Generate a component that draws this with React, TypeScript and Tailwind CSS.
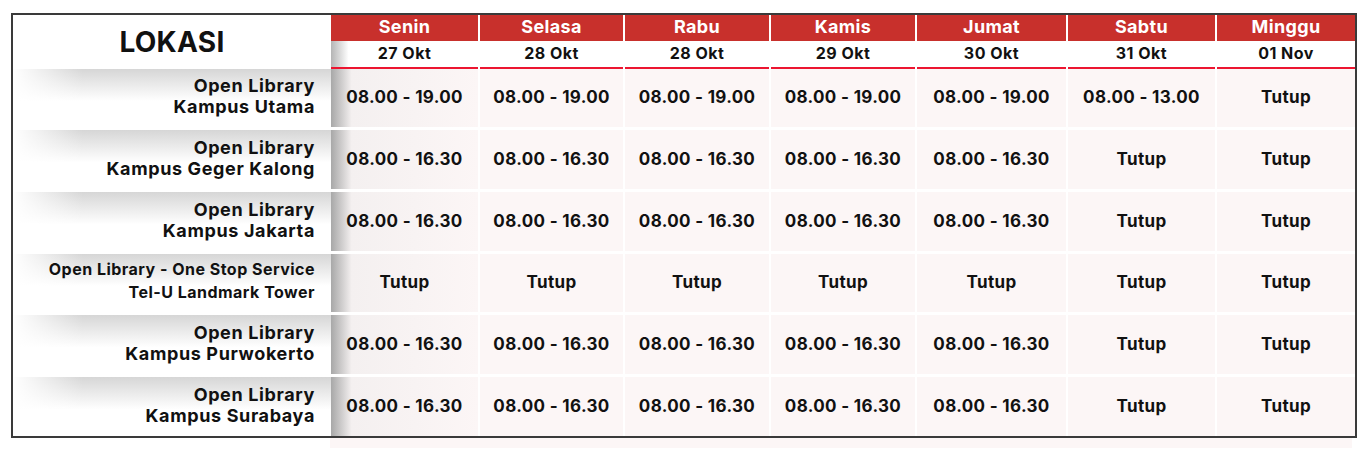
import React from 'react';

const days = [
  { day: 'Senin', date: '27 Okt' },
  { day: 'Selasa', date: '28 Okt' },
  { day: 'Rabu', date: '28 Okt' },
  { day: 'Kamis', date: '29 Okt' },
  { day: 'Jumat', date: '30 Okt' },
  { day: 'Sabtu', date: '31 Okt' },
  { day: 'Minggu', date: '01 Nov' },
];

const widths = ['w-[147px]', 'w-[145px]', 'w-[146px]', 'w-[146px]', 'w-[151px]', 'w-[149px]', 'w-[140px]'];

const rows = [
  { l1: 'Open Library', l2: 'Kampus Utama', h: 'h-[58px]', times: ['08.00 - 19.00', '08.00 - 19.00', '08.00 - 19.00', '08.00 - 19.00', '08.00 - 19.00', '08.00 - 13.00', 'Tutup'] },
  { l1: 'Open Library', l2: 'Kampus Geger Kalong', h: 'h-[62px]', times: ['08.00 - 16.30', '08.00 - 16.30', '08.00 - 16.30', '08.00 - 16.30', '08.00 - 16.30', 'Tutup', 'Tutup'] },
  { l1: 'Open Library', l2: 'Kampus Jakarta', h: 'h-[62px]', times: ['08.00 - 16.30', '08.00 - 16.30', '08.00 - 16.30', '08.00 - 16.30', '08.00 - 16.30', 'Tutup', 'Tutup'] },
  { l1: 'Open Library - One Stop Service', l2: 'Tel-U Landmark Tower', h: 'h-[61px]', small: true, times: ['Tutup', 'Tutup', 'Tutup', 'Tutup', 'Tutup', 'Tutup', 'Tutup'] },
  { l1: 'Open Library', l2: 'Kampus Purwokerto', h: 'h-[62px]', times: ['08.00 - 16.30', '08.00 - 16.30', '08.00 - 16.30', '08.00 - 16.30', '08.00 - 16.30', 'Tutup', 'Tutup'] },
  { l1: 'Open Library', l2: 'Kampus Surabaya', h: 'h-[62px]', times: ['08.00 - 16.30', '08.00 - 16.30', '08.00 - 16.30', '08.00 - 16.30', '08.00 - 16.30', 'Tutup', 'Tutup'] },
];

export default function App() {
  return (
    <div className="w-[1366px] h-[450px] bg-white pt-[13px] pl-[11px] font-['Inter','Liberation_Sans',sans-serif] text-[#111]">
      <div className="w-[1346px] border-2 border-[#3a3a3a]">
        {/* Header */}
        <div className="flex">
          <div className="w-[318px] h-[54px] flex items-center justify-center bg-white">
            <span className="text-[28px] font-bold tracking-[0.01em]">LOKASI</span>
          </div>
          {days.map((d, i) => (
            <div key={d.day} className={`${widths[i]} flex flex-col ${i > 0 ? 'border-l-2 border-white' : ''}`}>
              <div className="h-[26px] pb-[3px] bg-[#c8302c] text-white text-[18px] font-bold tracking-[0.02em] flex items-center justify-center">
                {d.day}
              </div>
              <div
                className={`h-[26px] pb-[2px] flex items-center justify-center text-[16px] font-bold tracking-[0.03em] ${
                  i === 0 ? 'bg-linear-to-r from-[#b5b5b5] via-white via-[12%] to-white' : 'bg-white'
                }`}
              >
                {d.date}
              </div>
              <div className="h-[2px] bg-[#ec1530]" />
            </div>
          ))}
        </div>

        {/* Rows */}
        {rows.map((r, ri) => (
          <div key={ri} className={`flex ${r.h} ${ri > 0 ? 'border-t-[3px] border-white' : ''}`}>
            <div className="w-[318px] flex flex-col items-end justify-center pr-[16px] pb-[4px] bg-[linear-gradient(to_right,white,transparent_22%),linear-gradient(to_bottom,#d6d6d6,white_55%)]">
              {r.small ? (
                <>
                  <span className="text-[16px] font-bold leading-[23px] tracking-[0.03em]">{r.l1}</span>
                  <span className="text-[16px] font-bold leading-[23px] tracking-[0.03em]">{r.l2}</span>
                </>
              ) : (
                <>
                  <span className="text-[18px] font-bold leading-[21px] tracking-[0.035em]">{r.l1}</span>
                  <span className="text-[18px] font-bold leading-[21px] tracking-[0.035em]">{r.l2}</span>
                </>
              )}
            </div>
            {r.times.map((t, ci) => (
              <div
                key={ci}
                className={`${widths[ci]} flex items-center justify-center text-[17px] font-bold tracking-[0.02em] ${
                  ci > 0 ? 'border-l-2 border-white' : ''
                } ${
                  ci === 0
                    ? 'bg-linear-to-r from-[#a8a8a8] via-[#f4f0f0] via-[14%] to-[#fcf6f6]'
                    : 'bg-[#fcf6f6]'
                }`}
              >
                {t}
              </div>
            ))}
          </div>
        ))}
      </div>
      {/* pink strip below the border */}
      <div className="ml-[319px] w-[1022px] h-[10px] bg-[#fcf6f6]" />
    </div>
  );
}
